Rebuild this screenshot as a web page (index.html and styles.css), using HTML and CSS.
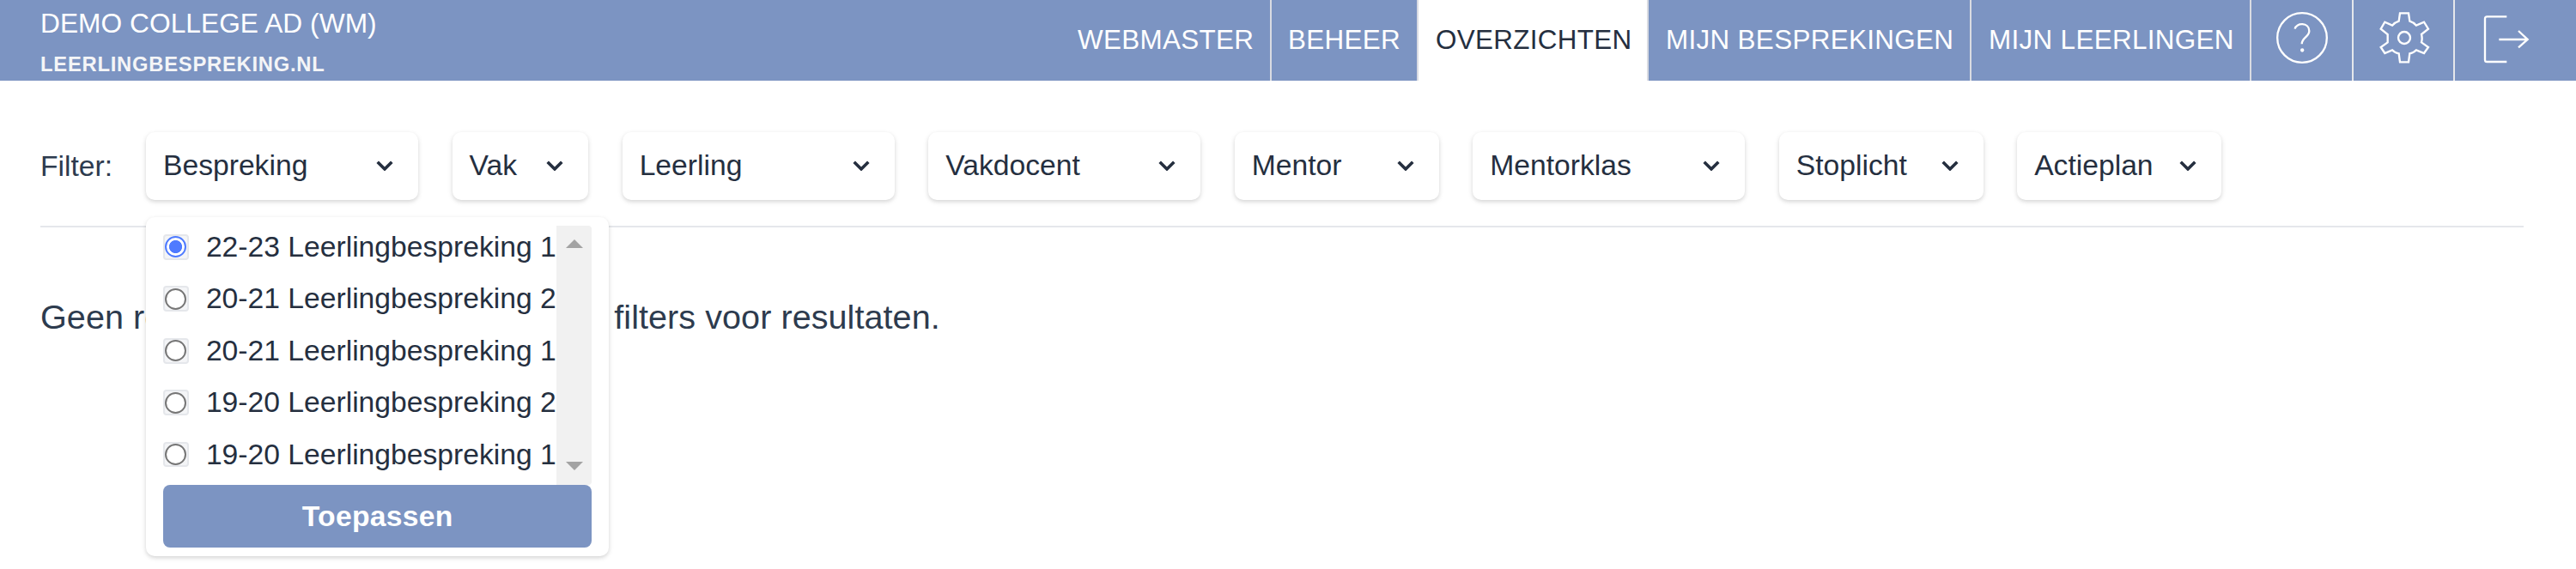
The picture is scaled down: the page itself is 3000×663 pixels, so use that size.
FILE: index.html
```html
<!DOCTYPE html>
<html lang="nl">
<head>
<meta charset="utf-8">
<title>Leerlingbespreking.nl</title>
<link rel="stylesheet" href="styles.css">
</head>
<body>
<header class="topbar">
  <div class="brand">
    <div class="school">DEMO COLLEGE AD (WM)</div>
    <div class="site">LEERLINGBESPREKING.NL</div>
  </div>
  <nav class="nav">
    <a class="item webmaster">WEBMASTER</a>
    <a class="item beheer">BEHEER</a>
    <a class="item overzichten active">OVERZICHTEN</a>
    <a class="item besprekingen">MIJN BESPREKINGEN</a>
    <a class="item leerlingen">MIJN LEERLINGEN</a>
    <a class="item icon help"><svg viewBox="-90 -90 180 180"><circle r="86.500"/><path d="M-25-31C-21-54 25-54 25-24C25-3-1 0-1 22"/><circle class="dot" cx="0.500" cy="43.500" r="6.500"/></svg></a>
    <a class="item icon gear"><svg viewBox="-90 -90 180 180"><circle r="21"/><path d="M-15-86H15L19-58Q32-54 42-43L69-55L84-31L60-12Q64 2 60 16L84 33L69 54L42 43Q32 54 19 55L15 85H-15L-19 55Q-32 54-42 43L-68 54L-82 33L-58 16V-12L-82-31L-68-55L-42-43Q-32-54-19-58Z"/></svg></a>
    <a class="item icon logout"><svg viewBox="-90 -90 180 180"><path d="M-2-74H-71Q-78-74-78-67V77Q-78 84-71 84H-2M-29 6H71M39-24L71 6L39 34"/></svg></a>
  </nav>
</header>
<main class="page">
  <div class="filters">
    <span class="label">Filter:</span>
    <div class="anchor">
      <button class="filter large">Bespreking<svg viewBox="0 0 20 12"><path d="M1.700 1.700L10 10L18.300 1.700"/></svg></button>
      <div class="menu">
        <div class="scroller">
          <div class="options">
            <label class="option"><span class="box"><i class="radio on"></i></span>22-23 Leerlingbespreking 1</label>
            <label class="option"><span class="box"><i class="radio"></i></span>20-21 Leerlingbespreking 2</label>
            <label class="option"><span class="box"><i class="radio"></i></span>20-21 Leerlingbespreking 1</label>
            <label class="option"><span class="box"><i class="radio"></i></span>19-20 Leerlingbespreking 2</label>
            <label class="option"><span class="box"><i class="radio"></i></span>19-20 Leerlingbespreking 1</label>
          </div>
          <div class="bar"><svg viewBox="0 0 20 10"><path d="M0 10L10 0L20 10Z"/></svg><svg viewBox="0 0 20 10"><path d="M0 0L10 10L20 0Z"/></svg></div>
        </div>
        <button class="apply">Toepassen</button>
      </div>
    </div>
    <button class="filter small">Vak<svg viewBox="0 0 20 12"><path d="M1.700 1.700L10 10L18.300 1.700"/></svg></button>
    <button class="filter large">Leerling<svg viewBox="0 0 20 12"><path d="M1.700 1.700L10 10L18.300 1.700"/></svg></button>
    <button class="filter large">Vakdocent<svg viewBox="0 0 20 12"><path d="M1.700 1.700L10 10L18.300 1.700"/></svg></button>
    <button class="filter medium">Mentor<svg viewBox="0 0 20 12"><path d="M1.700 1.700L10 10L18.300 1.700"/></svg></button>
    <button class="filter large">Mentorklas<svg viewBox="0 0 20 12"><path d="M1.700 1.700L10 10L18.300 1.700"/></svg></button>
    <button class="filter medium">Stoplicht<svg viewBox="0 0 20 12"><path d="M1.700 1.700L10 10L18.300 1.700"/></svg></button>
    <button class="filter medium">Actieplan<svg viewBox="0 0 20 12"><path d="M1.700 1.700L10 10L18.300 1.700"/></svg></button>
  </div>
  <p class="empty">Geen resultaten gevonden. Selecteer filters voor resultaten.</p>
</main>
</body>
</html>
```
FILE: styles.css
```css
* { box-sizing: border-box; }
body {
  margin: 0;
  height: 663px;
  overflow: hidden;
  background: #fff;
  color: #2d3b4e;
  font-family: "Liberation Sans", Arial, sans-serif;
}
button { border: 0; margin: 0; font: inherit; }
.topbar {
  display: flex;
  justify-content: space-between;
  height: 94px;
  background: #7c94c2;
  color: #fff;
}
.brand { padding: 7px 0 0 47px; white-space: nowrap; }
.school { font-size: 31.68px; line-height: 40px; letter-spacing: 0.05px; }
.site {
  margin-top: 14px;
  font-size: 23.76px;
  line-height: 28px;
  font-weight: 700;
  letter-spacing: 0.77px;
  color: #f4f5f7;
}
.nav { display: flex; font-size: 31.4px; letter-spacing: 0.33px; }
.item {
  display: flex;
  align-items: center;
  padding: 0 0 1px 20px;
  border-right: 2px solid #d9dbe2;
  white-space: nowrap;
}
.active { background: #fff; color: #252f3f; }
.webmaster { width: 246px; }
.beheer { width: 171px; padding-left: 19px; }
.overzichten { width: 268px; }
.besprekingen { width: 376px; }
.leerlingen { width: 326px; }
.icon { align-items: flex-start; padding: 14px 0 0 29px; border-color: #e5e7eb; }
.icon svg {
  width: 60px;
  height: 60px;
  fill: none;
  stroke: #fff;
  stroke-width: 7;
}
.icon .dot { fill: #fff; stroke: none; }
.help { width: 119px; }
.gear { width: 118px; }
.logout { width: 141px; border: 0; padding-left: 31px; }
.page { padding: 60px 61px 0 47px; }
.filters {
  display: flex;
  gap: 39.7px;
  height: 111px;
  border-bottom: 2px solid #e5e7eb;
  font-size: 33.66px;
}
.label { width: 83.5px; line-height: 79px; }
.anchor { position: relative; }
.filter {
  display: flex;
  align-items: center;
  justify-content: space-between;
  height: 79px;
  padding: 0 29px 1px 19.8px;
  border-radius: 10px;
  background: #fff;
  color: #252f3f;
  box-shadow: 0 2px 6px rgba(0, 0, 0, .1), 0 2px 4px rgba(0, 0, 0, .08);
}
.filter svg { width: 20px; height: 12px; fill: none; stroke: #252f3f; stroke-width: 3.6; }
.large { width: 316.9px; }
.medium { width: 237.7px; }
.small { width: 158.4px; }
.menu {
  position: absolute;
  z-index: 2;
  top: 99px;
  left: 0;
  width: 539px;
  height: 395px;
  padding: 10px 20px;
  border-radius: 10px;
  background: #fff;
  color: #252f3f;
  box-shadow: 0 2px 6px rgba(0, 0, 0, .1), 0 2px 4px rgba(0, 0, 0, .08);
}
.scroller { display: flex; height: 302px; }
.options { width: 458px; overflow: hidden; }
.option {
  display: flex;
  align-items: center;
  gap: 20px;
  height: 60.4px;
  padding-bottom: 10.5px;
  white-space: nowrap;
}
.box {
  display: flex;
  align-items: center;
  justify-content: center;
  width: 29.7px;
  height: 29.7px;
  padding-right: 1px;
  border: 2px solid #e5e7eb;
  border-radius: 4px;
  background: #f4f5f7;
}
.radio {
  display: flex;
  flex: none;
  width: 25px;
  height: 25px;
  border: 2px solid #767676;
  border-radius: 50%;
  background: #fff;
}
.on { border-color: #4f7bff; background: radial-gradient(circle, #4f7bff 7.2px, #fff 7.9px); }
.bar {
  display: flex;
  flex: 1;
  flex-direction: column;
  align-items: center;
  justify-content: space-between;
  padding: 16px 0 17px;
  border-radius: 0 4px 4px 0;
  background: #f1f1f1;
}
.bar svg { width: 20px; height: 10px; fill: #a3a3a3; }
.apply {
  display: block;
  width: 100%;
  height: 73px;
  padding: 0;
  border-radius: 8px;
  background: #7c94c2;
  color: #fff;
  font-weight: 700;
  letter-spacing: 0.3px;
}
.empty { margin: 80px 0 0; font-size: 39.6px; line-height: 48px; letter-spacing: 0.045px; }
```
